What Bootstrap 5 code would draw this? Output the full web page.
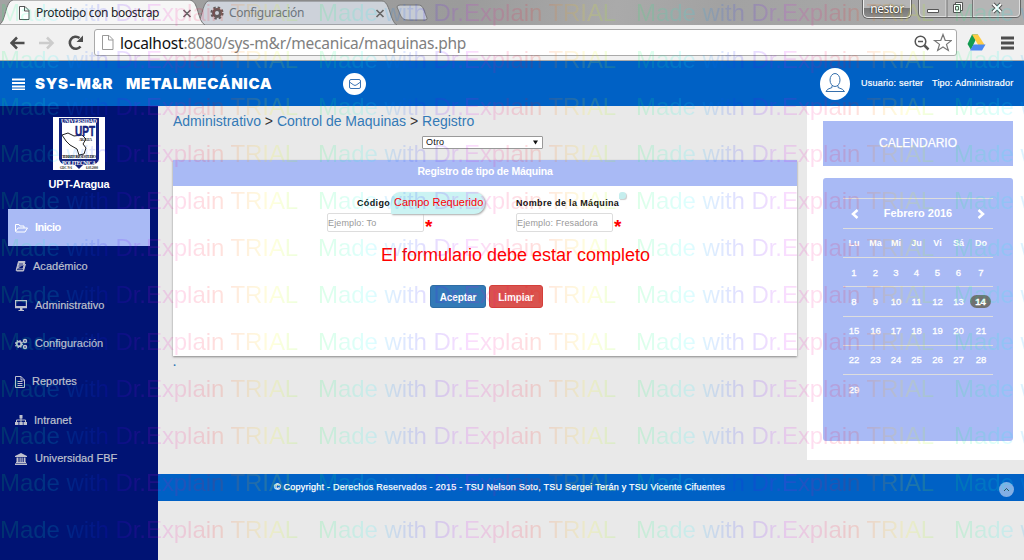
<!DOCTYPE html>
<html lang="es">
<head>
<meta charset="utf-8">
<title>Prototipo con boostrap</title>
<link href="https://cdn.jsdelivr.net/npm/bootstrap@5.3.0/dist/css/bootstrap.min.css" rel="stylesheet">
<style>
body{font-family:"Liberation Sans",Arial,sans-serif;font-size:11px;line-height:1.2;background:#e9e9e9;width:1024px;height:560px;overflow:hidden;white-space:nowrap}
svg{display:block;flex:none}
/* browser frame */
.tabstrip{height:25px;background:linear-gradient(100deg,#a3a3a3 0,#9b9b9b 45%,#aaa 60%,#a2a2a2 70%,#acacac 100%);font:12px "Noto Sans","Open Sans",sans-serif;color:#222;letter-spacing:-.33px}
.tabshapes{left:0;top:0}
.tabtext{line-height:25px;z-index:1}
.userbtn{left:863px;top:0;width:48px;height:18px;border:1px solid #eee;border-top:0;border-radius:0 0 5px 5px;background:linear-gradient(#b5b5b5 45%,#777 50%,#8d8d8d);box-shadow:0 0 0 1px #666;color:#fff;text-shadow:0 0 2px #000;line-height:17px;letter-spacing:-.5px}
.winbtns{left:918px;top:0}
.toolbar{height:36px;background:#f1f1f1;border-bottom:1px solid #aaa;padding:4px 0 4px 10px}
.omnibox{width:863px;height:27px;margin-left:11px;border:1px solid #aaa;border-radius:3px;background:#fff;padding-left:6px;font:15.5px "Noto Sans","Open Sans",sans-serif;color:#808080;letter-spacing:-.23px}
.omnibox b{font-weight:400;color:#111}
/* application header */
.topbar{height:45px;background:#0061c5;color:#fff;padding-left:12px}
.brandname{font:900 15px Inter,"Liberation Sans",sans-serif;letter-spacing:.68px}
.disc{background:#fff;border-radius:50%}
.userinfo{font-size:9px;-webkit-text-stroke:.2px #fff;letter-spacing:.22px}
.sidebar{width:158px;height:454px;background:#001374;padding:11px 8px 0;color:#bfc1ce}
.school{color:#fff;font-weight:700;font-size:11px;margin:8px 0 18px;letter-spacing:-.2px}
.menuitem{height:38.4px;padding-left:7px;font-size:11px;-webkit-text-stroke:.2px currentColor;letter-spacing:.03px}
.menuitem.current{height:37px;background:#a9baf5;color:#fff;margin-bottom:1.4px;font-weight:700;-webkit-text-stroke:0;letter-spacing:-.5px}
.mainarea{width:624px;margin-left:15px}
.crumbs{font-size:14px;height:17px;margin-top:7px;color:#333}
.crumbs a{color:#337ab7;text-decoration:none}
.picker{width:121px;height:13px;border:1px solid #999;background:#fff;margin:6px 0 11px 249px;font-size:9px;padding:0 4px 0 3px;color:#111;border-radius:1px;letter-spacing:.2px}
.panelbox{height:196px;background:#fff;box-shadow:0 1px 2px #888}
.panelhead{height:26px;background:#a9baf5;color:#fff;font-weight:700;font-size:10.5px;line-height:23px;letter-spacing:-.2px}
.fieldname{font-size:9px;font-weight:700;color:#111;letter-spacing:.36px}
.textfield{width:97px;height:19px;border:1px solid #ddd;border-radius:2px;color:#999;font-size:9px;line-height:18px;padding-left:0;letter-spacing:.13px}
.star{color:red;font-size:19px;line-height:27px;height:18px;font-weight:700;padding-left:1px}
.tip{left:391px;top:192px;width:94px;height:22px;background:#cbf3f3;border-radius:9px 11px 11px 1px;box-shadow:1px 1px 2px #aaa;color:red;font-size:11px;line-height:21px;padding-left:3px}
.tipempty{left:619px;top:192px;width:7px;height:7px;background:#c5eeee;border-radius:3px 3px 3px 0;box-shadow:1px 1px 1px #ccc}
.notice{color:red;font-size:18px;line-height:20px;margin-top:13px;padding-left:208px}
.btn.act{font-size:10px;line-height:15px;padding:4px 0 2px;height:23px;border-radius:3px;color:#fff;font-weight:700;letter-spacing:-.1px}
.act.ok{background:#337ab7;border-color:#2e6da4;width:56px}
.act.clear{background:#d9534f;border-color:#d43f3a;width:54px}
.rightcol{width:217px;height:354px;background:#fff;margin-left:10px;padding:15px 11px 0 16px}
.caltitle{height:45px;background:#a9baf5;color:#fff;font-size:12px;-webkit-text-stroke:.25px #fff}
.calbox{height:263px;margin-top:12px;border-radius:3px;background:#a9baf5;padding:20px 20px 0;color:#fff;font-weight:700}
.calmonth{height:30px;font-size:11px;border-top:1px solid #ddd;padding:0 7px}
.calgrid{display:grid;grid-template-columns:22px 21px 20px 21px 21px 21px 24px;font-size:9px;height:29.2px;border-top:1px solid #ddd;text-align:center;align-items:center}
.calgrid span{line-height:13px;border-radius:7px}
.calgrid .today{background:#707070;margin:0 2px 0 1px;font-weight:700}
.calgrid.days{font-weight:400;font-size:9.5px;-webkit-text-stroke:.3px #fff}
.footerbar{height:27px;margin-top:14px;background:#0061c5;color:#fff;font-size:9px;-webkit-text-stroke:.25px #fff;letter-spacing:.245px}
.upbtn{left:999px;top:482px;width:15px;height:15px;background:#83afe4;border-radius:50%}
/* tiled trial mark over the whole window */
.marks{inset:0;overflow:hidden;opacity:.13;pointer-events:none;z-index:9;font-size:24px;line-height:47px;white-space:pre;color:transparent;letter-spacing:-.06px}
.marks div{height:47px;width:1272px;background:repeating-linear-gradient(90deg,#00ff55 0,#00ffff 53px,#0080ff 75px,#2a00ff 110px,#d500ff 150px,#ff0080 180px,#ff0000 215px,#ff8000 240px,#ffff00 272px,#80ff00 298px,#00ff55 318px);-webkit-background-clip:text;background-clip:text}
.marks div:first-child{margin-top:-11px}
.marks span{display:inline-block;width:318px}
</style>
</head>
<body class="position-relative">
<div class="tabstrip position-relative">
 <svg class="tabshapes position-absolute" width="440" height="25"><path d="M196 25C202 22 202 3 208 1H382C390 1 390 22 397 25Z" fill="#cdd2da" stroke="#777"/><path d="M397 7Q397 5 400 5H418C423 5 423 8 427 18Q428 20 425 20H408C401 20 401 16 397 7Z" fill="#c6cbd3" stroke="#777"/><path d="M-1 25C6 22 5 1 13 0H190C199 1 197 21 205 25Z" fill="#f6f6f6" stroke="#777"/>
 <path d="M19.500 6.500H25L29 10.500V19.500H19.500ZM24.500 6.500V11H29" fill="#fff" stroke="#555"/><path d="M183.500 10l7 7m0-7l-7 7M376.500 10l7 7m0-7l-7 7" stroke="#666" stroke-width="1.700"/>
 <circle cx="217" cy="13" r="3.500" fill="none" stroke="#625c5c" stroke-width="3"/><circle cx="217" cy="13" r="5.600" fill="none" stroke="#625c5c" stroke-width="2" stroke-dasharray="2.400 2"/></svg>
 <div class="d-flex position-relative"><span class="tabtext" style="margin-left:36px;width:193px">Prototipo con boostrap</span><span class="tabtext text-secondary">Configuración</span></div>
 <div class="userbtn position-absolute text-center">nestor</div>
 <svg class="winbtns position-absolute" width="104" height="18"><path d="M.5 0V13Q.5 17.500 5 17.500H98Q102.500 17.500 102.500 13V0" fill="#b5b5b5" stroke="#666"/><path d="M1.500 0V13Q1.500 16.500 5 16.500H98Q101.500 16.500 101.500 13V0M28 0V17M55 0V17" fill="none" stroke="#ddd"/><path d="M29 0V17M54.500 0V17" stroke="#777"/><path d="M9.500 9.500h11v3h-11zM37.500 2.500h7v8h-7z" fill="#fff" stroke="#555"/><path d="M35.500 4.500h7v8h-7zM37.500 6.500h3v3.500h-3z" fill="#fff" stroke="#555"/><path d="M75 4l8 8m0-8l-8 8" stroke="#555" stroke-width="4"/><path d="M75 4l8 8m0-8l-8 8" stroke="#fff" stroke-width="2"/></svg>
</div>
<div class="toolbar d-flex align-items-center">
 <svg width="73" height="27"><path d="M14.500 14H2M7 8.500L1.500 14L7 19.500" fill="none" stroke="#4d4d4d" stroke-width="2.500"/><path d="M29 14h13M37 8.500L42.500 14L37 19.500" fill="none" stroke="#ccc" stroke-width="2.500"/><path d="M70.500 17.500A6 6 0 1 1 69.500 9" fill="none" stroke="#4d4d4d" stroke-width="2.600"/><path d="M73 6.500V13H66.500Z" fill="#4d4d4d"/></svg>
 <div class="omnibox d-flex align-items-center"><svg width="13" height="17" class="me-1"><path d="M1.500 1.500H8L12 5.500V15.500H1.500ZM7.500 1.500V6H12" fill="#fff" stroke="#999"/></svg><span style="padding-left:2px"><b>localhost</b>:8080/sys-m&amp;r/mecanica/maquinas.php</span>
 <svg class="ms-auto me-1" width="38" height="22"><circle cx="6.500" cy="9.500" r="5.300" fill="none" stroke="#555" stroke-width="1.500"/><path d="M4 9.500h5" stroke="#555" stroke-width="1.500"/><path d="M10.500 13.500l4 4" stroke="#555" stroke-width="2.500"/><path d="M29 2.500l2.200 5.800 6.300.2-5 3.900 1.800 6-5.300-3.500-5.300 3.500 1.800-6-5-3.900 6.300-.2z" fill="#fff" stroke="#777" stroke-width="1.200"/></svg></div>
 <svg width="60" height="27"><path d="M15 5.500h6l-7 15.500-3.500-6z" fill="#139b51"/><path d="M15 5.500h6l7 11h-6.500z" fill="#fc4"/><path d="M16.500 15.500h12l-3.500 6H13z" fill="#4a89f3"/><path d="M44 9h13M44 14h13M44 19h13" stroke="#4d4d4d" stroke-width="2.800"/></svg>
</div>
<header class="topbar d-flex align-items-center">
 <svg width="13" height="12"><path d="M0 1.500h13M0 5h13M0 8.500h13M0 11.500h13" stroke="#fff" stroke-width="1.800"/></svg>
 <div class="brandname d-flex" style="margin-left:10px"><span style="width:91px">SYS-M&amp;R</span><span style="width:217px">METALMECÁNICA</span></div>
 <span class="disc d-flex align-items-center justify-content-center" style="width:23px;height:22px"><svg width="12" height="10"><path d="M.5 2Q.5.500 2 .5H10Q11.500.500 11.500 2V8Q11.500 9.500 10 9.500H2Q.5 9.500.5 8ZM.5 3Q5 6.500 6 6.500T11.500 3" fill="none" stroke="#3973b5"/></svg></span>
 <span class="disc" style="width:30px;height:32px;margin-left:454px"><svg width="30" height="32"><ellipse cx="15" cy="12" rx="5" ry="6.500" fill="none" stroke="#356fac"/><path d="M12 17.500v2Q6.500 21 6 23.500H24.500Q23.500 21 18 19.500v-2" fill="none" stroke="#356fac"/></svg></span>
 <span class="userinfo" style="margin-left:11px;width:71px">Usuario: serter</span><span class="userinfo">Tipo: Administrador</span>
</header>
<div class="d-flex">
 <nav class="sidebar">
  <svg class="mx-auto" width="52" height="53"><path d="M0 0h52v53H0z" fill="#fff"/><path d="M6 1h40v41q-1 5-7 6h-9l-4 4-4-4h-9q-6-1-7-6z" fill="#14237d"/><path d="M9 6h34v36H9z" fill="#fff"/><path d="M9 18l6-2 6 3 8-1 4 4-3 5 3 4-2 6-5 1-2-6-7-4-4-4z" fill="#fff" stroke="#222"/><g font-family="Liberation Serif" font-weight="700" font-size="5.500"><text x="8" y="5.500" fill="#fff" textLength="36">UNIVERSIDAD</text><text x="9" y="47.500" fill="#fff" textLength="34">POLITECNICA</text><text x="9" y="41" fill="#111" font-size="4" textLength="34">TERRITORIO ESTUDIO</text><text x="26" y="23.500" fill="#111" font-size="3.500" textLength="13">ARAGUA</text><text x="7" y="52" fill="#111" font-size="3">GDC Nº6</text><text x="33" y="52" fill="#111" font-size="3">6.03.2000</text></g><text x="22" y="19" fill="#14237d" stroke="#14237d" stroke-width=".5" font-size="15" font-weight="700" textLength="20" lengthAdjust="spacingAndGlyphs">UPT</text></svg>
  <div class="school text-center">UPT-Aragua</div>
  <div class="menuitem current d-flex align-items-center"><svg width="13" height="12" style="margin-right:7px"><path d="M.5 9V2.500h3.500l1 1.500h4v2M.5 9.500L3 6h9.500L10 10H1z" fill="none" stroke="#fff"/></svg>Inicio</div>
  <div class="menuitem d-flex align-items-center"><svg width="11" height="11" style="margin-right:7px"><path d="M3.500.500H10L8 8H1.500zM1.500 8Q.5 10 2 10H8.500L10.500 3" fill="#bfc1ce" stroke="#bfc1ce"/><path d="M4 3h4M3.500 5h4M2 8.600h6" stroke="#001374" stroke-width=".8"/></svg>Académico</div>
  <div class="menuitem d-flex align-items-center"><svg width="12" height="11" style="margin-right:8px"><path d="M.6.600h10.800v7H.6z" fill="none" stroke="#bfc1ce" stroke-width="1.200"/><path d="M1 6h10v2H1zM5 8h2.500v2H9v1H3.500v-1H5z" fill="#bfc1ce"/></svg>Administrativo</div>
  <div class="menuitem d-flex align-items-center"><svg width="13" height="12" style="margin-right:7px" fill="none" stroke="#bfc1ce"><circle cx="4" cy="6" r="2.300" stroke-width="1.800"/><circle cx="4" cy="6" r="3.500" stroke-width="1.200" stroke-dasharray="1.400 1.350"/><circle cx="10" cy="3" r="1.500" stroke-width="1.500"/><circle cx="10" cy="9" r="1.500" stroke-width="1.500"/></svg>Configuración</div>
  <div class="menuitem d-flex align-items-center"><svg width="10" height="12" style="margin-right:7px"><path d="M.5.500H6L9.500 4V11.500H.5ZM6 .5V4H9.500M2.500 5.500h5M2.500 7.500h5M2.500 9.500h5" fill="none" stroke="#bfc1ce"/></svg>Reportes</div>
  <div class="menuitem d-flex align-items-center"><svg width="12" height="11" style="margin-right:7px"><path d="M4.500 0h3v3.500h-3zM0 7h3.500v3H0zM4.300 7h3.500v3H4.300zM8.500 7H12v3H8.500z" fill="#bfc1ce"/><path d="M6 3v4M1.500 7V5h9v2" fill="none" stroke="#bfc1ce"/></svg>Intranet</div>
  <div class="menuitem d-flex align-items-center"><svg width="12" height="12" style="margin-right:8px"><path d="M0 3L6 0l6 3v1H0zM1.500 4.500h2V9h-2zM4.500 4.500h1.200V9H4.500zM6.500 4.500h1.200V9H6.500zM8.700 4.500h1.800V9H8.700zM1 9h10v1H1zM0 10.500h12V12H0z" fill="#bfc1ce"/></svg>Universidad FBF</div>
 </nav>
 <div>
  <div class="d-flex">
   <main class="mainarea">
    <div class="crumbs"><a href="#">Administrativo</a> &gt; <a href="#">Control de Maquinas</a> &gt; <a href="#">Registro</a></div>
    <div class="picker d-flex justify-content-between align-items-center"><span>Otro</span><svg width="5" height="5"><path d="M0 .5h5L2.500 4.500z" fill="#111"/></svg></div>
    <section class="panelbox">
     <div class="panelhead text-center">Registro de tipo de Máquina</div>
     <div class="d-flex" style="padding:12px 0 0 154px">
      <div style="width:189px"><div class="fieldname" style="padding-left:30px">Código</div><div class="d-flex mt-1"><div class="textfield">Ejemplo: To</div><span class="star">*</span></div></div>
      <div><div class="fieldname">Nombre de la Máquina</div><div class="d-flex mt-1"><div class="textfield">Ejemplo: Fresadora</div><span class="star">*</span></div></div>
     </div>
     <div class="notice">El formulario debe estar completo</div>
     <div class="d-flex" style="padding:20px 0 0 257px;gap:3px"><button class="btn act ok">Aceptar</button><button class="btn act clear">Limpiar</button></div>
    </section>
    <div style="height:10px;line-height:8px;margin-top:2px;color:#337ab7;font-weight:700">.</div>
   </main>
   <aside class="rightcol">
    <div class="caltitle d-flex align-items-center justify-content-center">CALENDARIO</div>
    <div class="calbox">
     <div class="calmonth d-flex align-items-center justify-content-between"><svg width="9" height="10"><path d="M7.500 1L3 5l4.500 4" fill="none" stroke="#fff" stroke-width="2.500"/></svg>Febrero 2016<svg width="9" height="10"><path d="M1.500 1L6 5 1.500 9" fill="none" stroke="#fff" stroke-width="2.500"/></svg></div>
     <div class="calgrid"><span>Lu</span><span>Ma</span><span>Mi</span><span>Ju</span><span>Vi</span><span>Sá</span><span>Do</span></div>
     <div class="calgrid days"><span>1</span><span>2</span><span>3</span><span>4</span><span>5</span><span>6</span><span>7</span></div>
     <div class="calgrid days"><span>8</span><span>9</span><span>10</span><span>11</span><span>12</span><span>13</span><span class="today">14</span></div>
     <div class="calgrid days"><span>15</span><span>16</span><span>17</span><span>18</span><span>19</span><span>20</span><span>21</span></div>
     <div class="calgrid days"><span>22</span><span>23</span><span>24</span><span>25</span><span>26</span><span>27</span><span>28</span></div>
     <div class="calgrid days"><span>29</span></div>
    </div>
   </aside>
  </div>
  <footer class="footerbar d-flex align-items-center"><span style="margin-left:116px">© Copyright - Derechos Reservados - 2015 - TSU Nelson Soto, TSU Sergei Terán y TSU Vicente Cifuentes</span></footer>
 </div>
</div>
<div class="tip position-absolute">Campo Requerido</div><div class="tipempty position-absolute"></div>
<div class="upbtn position-absolute d-flex align-items-center justify-content-center"><svg width="7" height="5"><path d="M1 4L3.500 1.500 6 4" fill="none" stroke="#345"/></svg></div>
<div class="marks position-absolute" id="marks" aria-hidden="true"></div>
<script>
document.getElementById('marks').innerHTML = Array(13).fill('<div>' + '<span>Made with Dr.Explain TRIAL</span>'.repeat(4) + '</div>').join('');
</script>
<script src="https://cdn.jsdelivr.net/npm/bootstrap@5.3.0/dist/js/bootstrap.bundle.min.js"></script>
</body>
</html>
